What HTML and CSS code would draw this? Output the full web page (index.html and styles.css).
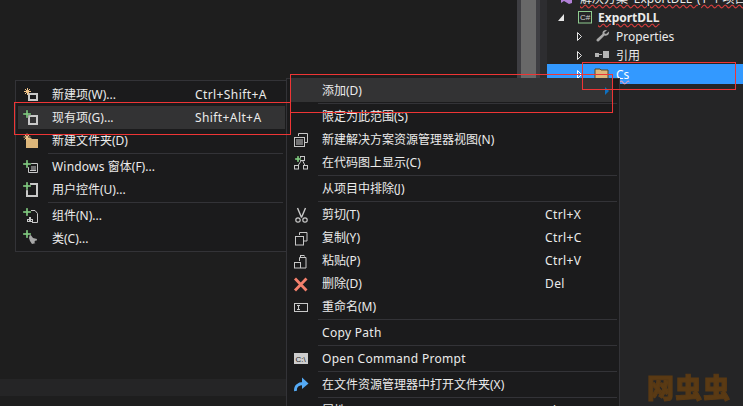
FILE: index.html
```html
<!DOCTYPE html>
<html lang="zh-CN">
<head>
<meta charset="utf-8">
<title>Solution Explorer context menu</title>
<link rel="stylesheet" href="styles.css">
</head>
<body>
<div class="app">
  <div class="editor"><div class="editor-bar"></div></div>
  <div class="scrollbar"><div class="thumb"></div></div>
  <div class="gutter"></div>
  <div class="panel">
    <div class="tree">
      <div class="node lvl0">
        <svg class="sol-icon" viewBox="0 0 13 19"><path d="M1 4l3 2 5-3 3 1v10l-3 1-5-3-3 2z" fill="#b180d7"/><path d="M4 8v3l3-1.500z" fill="#252526"/></svg>
        <span class="squiggle">解决方案 'ExportDLL' (1 个项目)</span>
      </div>
      <div class="node lvl1">
        <svg class="arrow" viewBox="0 0 8 19"><path d="M7 6v7H1z" fill="#e6e6e6"/></svg>
        <svg class="ticon" viewBox="0 0 16 19"><rect x="2.500" y="3.500" width="13" height="11.500" fill="none" stroke="#8fcb8f"/><text x="4" y="12" class="cs-text">C#</text></svg>
        <b class="squiggle">ExportDLL</b>
      </div>
      <div class="node lvl2">
        <svg class="arrow" viewBox="0 0 8 19"><path d="M2.500 5.500l4 4-4 4z" fill="none" stroke="#e6e6e6"/></svg>
        <svg class="ticon" viewBox="0 0 16 19"><path d="M13 3l-3 3 2 1 3-2.500c.5 2.500-1.500 5-4.500 4L5 14c-1.500 1.500-3.500-.5-2-2l5.500-5C8 4 10.500 2.500 13 3z" fill="#a8a8a8"/></svg>
        <span>Properties</span>
      </div>
      <div class="node lvl2">
        <svg class="arrow" viewBox="0 0 8 19"><path d="M2.500 5.500l4 4-4 4z" fill="none" stroke="#e6e6e6"/></svg>
        <svg class="ticon" viewBox="0 0 16 19"><rect x="1" y="7" width="4" height="4" fill="#b4b4b4"/><rect x="5" y="8" width="3" height="1" fill="#b4b4b4"/><rect x="9" y="5" width="6" height="7" fill="#b4b4b4"/></svg>
        <span>引用</span>
      </div>
      <div class="node lvl2 selected">
        <svg class="arrow" viewBox="0 0 8 19"><path d="M2.500 5.500l4 4-4 4z" fill="none" stroke="#fff"/></svg>
        <svg class="ticon" viewBox="0 0 16 19"><path d="M1 4h5l1 1h7v11H1z" fill="#dcb67a" stroke="#5a4520"/></svg>
        <span class="squiggle-pink">Cs</span>
      </div>
    </div>
  </div>
</div>

<div class="menu main-menu">
  <div class="item hover"><span class="ic"></span><span>添加(D)</span><span class="sub-arrow"></span></div>
  <div class="sep"></div>
  <div class="item"><span class="ic"></span><span>限定为此范围(S)</span></div>
  <div class="item">
    <svg class="ic" viewBox="0 0 18 23"><path d="M5.500 8V5.500h9v9H12" fill="none" stroke="#c8c8c8"/><rect x="1.500" y="9.500" width="10" height="9" fill="#1b1b1c" stroke="#c8c8c8"/><path d="M3 12h7M3 14h7M3 16h7" stroke="#c8c8c8"/></svg>
    <span>新建解决方案资源管理器视图(N)</span>
  </div>
  <div class="item">
    <svg class="ic" viewBox="0 0 18 23"><path d="M9 8.500l-4 6M9 8.500l3 6" fill="none" stroke="#c8c8c8"/><rect x="7.500" y="5.500" width="4" height="4" fill="#1b1b1c" stroke="#c8c8c8"/><rect x="1.500" y="14.500" width="4" height="3.500" fill="#1b1b1c" stroke="#c8c8c8"/><rect x="10.500" y="14.500" width="4" height="3.500" fill="#1b1b1c" stroke="#c8c8c8"/><path class="plus" d="M4 5h2v2h2v2H6v2H4V9H2V7h2z"/></svg>
    <span>在代码图上显示(C)</span>
  </div>
  <div class="sep"></div>
  <div class="item"><span class="ic"></span><span>从项目中排除(J)</span></div>
  <div class="sep"></div>
  <div class="item">
    <svg class="ic" viewBox="0 0 18 23"><path d="M4.500 5l4 9.500M12.500 5l-4 9.500" fill="none" stroke="#c8c8c8" stroke-width="1.400"/><circle cx="5" cy="17" r="2.200" fill="none" stroke="#c8c8c8" stroke-width="1.200"/><circle cx="12" cy="17" r="2.200" fill="none" stroke="#c8c8c8" stroke-width="1.200"/></svg>
    <span>剪切(T)</span><span class="key">Ctrl+X</span>
  </div>
  <div class="item">
    <svg class="ic" viewBox="0 0 18 23"><path d="M6.500 9V6.500h7.500v8.500H11" fill="none" stroke="#c8c8c8"/><rect x="2.500" y="10.500" width="8" height="8.500" fill="none" stroke="#c8c8c8"/></svg>
    <span>复制(Y)</span><span class="key">Ctrl+C</span>
  </div>
  <div class="item">
    <svg class="ic" viewBox="0 0 18 23"><path d="M6.500 12V8.500h6.500v10.500H8" fill="none" stroke="#c8c8c8"/><rect x="7.500" y="6.500" width="3.500" height="2" fill="none" stroke="#c8c8c8"/><rect x="1.500" y="13.500" width="6" height="5.500" fill="none" stroke="#c8c8c8"/></svg>
    <span>粘贴(P)</span><span class="key">Ctrl+V</span>
  </div>
  <div class="item">
    <svg class="ic" viewBox="0 0 18 23"><path d="M2 6.500l11.500 12M13.500 6.500l-11.500 12" fill="none" stroke="#f4806c" stroke-width="2.800"/></svg>
    <span>删除(D)</span><span class="key">Del</span>
  </div>
  <div class="item">
    <svg class="ic" viewBox="0 0 18 23"><rect x="1.500" y="8.500" width="13" height="8" fill="none" stroke="#c8c8c8"/><path d="M4 10.500h3M4 14.500h3M5.500 10.500v4" fill="none" stroke="#c8c8c8"/></svg>
    <span>重命名(M)</span>
  </div>
  <div class="sep"></div>
  <div class="item"><span class="ic"></span><span class="latin">Copy Path</span></div>
  <div class="sep"></div>
  <div class="item">
    <svg class="ic" viewBox="0 0 18 23"><rect x="1" y="6" width="14" height="11" fill="#cdcdcd"/><text x="2.500" y="14.500" class="cmd-text">C:\</text></svg>
    <span class="latin">Open Command Prompt</span>
  </div>
  <div class="sep"></div>
  <div class="item">
    <svg class="ic" viewBox="0 0 18 23"><path d="M2.500 18c-.5-4.500 2.500-7.500 8-7.500" fill="none" stroke="#55aaf5" stroke-width="2.800"/><path d="M9 4.500l6.500 6-6.500 5.500z" fill="#55aaf5"/></svg>
    <span>在文件资源管理器中打开文件夹(X)</span>
  </div>
  <div class="sep"></div>
  <div class="item"><span class="ic"></span><span>属性(R)</span><span class="key">Alt+Enter</span></div>
</div>

<div class="menu sub-menu">
  <div class="item">
    <svg class="ic" viewBox="0 0 18 23"><rect x="6" y="11" width="8" height="6" fill="none" stroke="#c8c8c8" stroke-width="2"/><path class="star" d="M4.500 5v7M1 8.500h7M2 6l5 5M7 6l-5 5"/></svg>
    <span>新建项(W)...</span><span class="key">Ctrl+Shift+A</span>
  </div>
  <div class="item hover">
    <svg class="ic" viewBox="0 0 18 23"><rect x="6" y="10" width="8" height="8" fill="none" stroke="#c8c8c8" stroke-width="2"/><path class="plus" d="M3 4h2v3h3v2H5v3H3V9H0V7h3z"/></svg>
    <span>现有项(G)...</span><span class="key">Shift+Alt+A</span>
  </div>
  <div class="item">
    <svg class="ic" viewBox="0 0 18 23"><path d="M3 9h5l1 1h6v9H3z" fill="#dcb67a"/><path class="star" d="M4 4.500v7M.5 8h7M1.500 5.500l5 5M6.500 5.500l-5 5"/></svg>
    <span>新建文件夹(D)</span>
  </div>
  <div class="sep"></div>
  <div class="item">
    <svg class="ic" viewBox="0 0 18 23"><path d="M7 8.500h7.500v9h-9V12" fill="none" stroke="#c8c8c8"/><path d="M8 12h5M8 14h5M7 15.500h6" stroke="#c8c8c8"/><path class="plus" d="M3 5h2v3h3v2H5v3H3v-3H0V8h3z"/></svg>
    <span><span class="win">Windows</span> 窗体(F)...</span>
  </div>
  <div class="item">
    <svg class="ic" viewBox="0 0 18 23"><path d="M7 6h7v12H4v-6" fill="none" stroke="#c8c8c8" stroke-width="2"/><path class="plus" d="M3 4h2v3h3v2H5v3H3V9H0V7h3z"/></svg>
    <span>用户控件(U)...</span>
  </div>
  <div class="sep"></div>
  <div class="item">
    <svg class="ic" viewBox="0 0 18 23"><path d="M8 6.500h4l2.500 3v9H9" fill="none" stroke="#c8c8c8"/><rect x="4.500" y="15.500" width="2" height="2" fill="none" stroke="#c8c8c8"/><rect x="7.500" y="15.500" width="2" height="2" fill="none" stroke="#c8c8c8"/><rect x="6" y="13" width="2" height="2" fill="#c8c8c8"/><path class="plus" d="M3 4h2v3h3v2H5v3H3V9H0V7h3z"/></svg>
    <span>组件(N)...</span>
  </div>
  <div class="item">
    <svg class="ic" viewBox="0 0 18 23"><path d="M7 7l3 4 4 1-1 4-4 1-2-3-1-3z" fill="#a8a8a8"/><circle cx="13" cy="15" r="1.500" fill="#1b1b1c"/><path class="plus" d="M3 3h2v3h3v2H5v3H3V8H0V6h3z"/></svg>
    <span>类(C)...</span>
  </div>
</div>

<div class="mark mark-a"></div>
<div class="mark mark-b"></div>
<div class="mark mark-c"></div>
<div class="watermark">网虫虫</div>
</body>
</html>
```

FILE: styles.css
```css
* { box-sizing: border-box; }
html, body { margin: 0; height: 100%; overflow: hidden; background: #1e1e1e; }
body {
  font: 12px/23px "Noto Sans", "Noto Sans CJK SC", sans-serif;
  color: #ebebeb;
}
.app { display: grid; grid-template-columns: 517px 23px 7px 1fr; height: 406px; }
.editor { background: #1e1e1e; padding-top: 379px; }
.editor-bar { height: 17px; background: #252526; }
.scrollbar { background: #3e3e42; padding: 0 4px; }
.thumb { height: 100%; background: #686868; }
.gutter { background: #2d2d30; }
.panel { background: #252526; overflow: hidden; }
.tree { margin-top: -11px; }
.node { display: flex; align-items: center; height: 19px; line-height: 19px; white-space: nowrap; }
.lvl0 { padding-left: 13px; }
.lvl1 { padding-left: 10px; }
.lvl2 { padding-left: 28px; }
.selected { background: #3399ff; color: #fff; height: 20px; margin-top: -1px; }
.arrow { width: 8px; height: 19px; flex: none; margin-right: 11px; }
.ticon { width: 16px; height: 19px; flex: none; margin-right: 6px; }
.sol-icon { width: 13px; height: 19px; flex: none; margin-right: 7px; }
.squiggle { text-decoration: underline wavy #d23c3c; text-underline-offset: 1px; }
.squiggle-pink { text-decoration: underline wavy #d8a0c8; text-underline-offset: 1px; }
.cs-text { font: 8px "Liberation Sans", sans-serif; fill: #d0d0d0; }
.cmd-text { font: 8px "Liberation Sans", sans-serif; fill: #1e1e1e; }

.menu {
  position: absolute;
  background: #1b1b1c;
  border: 1px solid #333337;
  white-space: nowrap;
  overflow: hidden;
}
.main-menu { left: 286px; top: 78px; width: 334px; height: 340px; padding: 0 2px 0 3px; z-index: 1; }
.sub-menu { left: 15px; top: 80px; width: 272px; height: 172px; padding: 2px 1px 0 2px; z-index: 2; }
.item { display: flex; align-items: center; height: 23px; }
.hover { background: #333334; }
.main-menu .item.hover { margin-right: 4px; }
.ic { display: block; width: 18px; height: 23px; flex: none; }
.main-menu .ic { margin: 0 11px 0 3px; }
.sub-menu .ic { margin: 0 11px 0 5px; }
.key { margin-left: auto; letter-spacing: .4px; }
.main-menu .key { width: 72px; }
.sub-menu .key { width: 90px; }
.sep { height: 1px; margin: 1px 0 1px 28px; background: #333337; }
.sub-menu .sep { margin-left: 30px; margin-right: 2px; }
.latin { letter-spacing: .3px; }
.win { letter-spacing: .2px; }
.sub-arrow {
  margin-left: auto; margin-right: 4px;
  width: 0; height: 0;
  border-left: 4px solid #0e70c0;
  border-top: 4px solid transparent;
  border-bottom: 4px solid transparent;
}
.plus { fill: #7cc47c; stroke: #1b1b1c; stroke-width: .3; }
.star { stroke: #f0c48a; stroke-width: 1; fill: none; }

.mark { position: absolute; border: 1px solid #ee3535; z-index: 3; }
.mark-a { left: 14px; top: 102px; width: 277px; height: 33px; }
.mark-b { left: 290px; top: 74px; width: 323px; height: 39px; }
.mark-c { left: 582px; top: 62px; width: 154px; height: 28px; }
.watermark {
  position: absolute; left: 647px; top: 369px;
  font: 900 27px/36px "Noto Sans CJK SC", sans-serif;
  letter-spacing: 1px;
  color: #5a3a14;
  -webkit-text-stroke: 1px #5a3a14;
  filter: blur(.5px);
}
```
